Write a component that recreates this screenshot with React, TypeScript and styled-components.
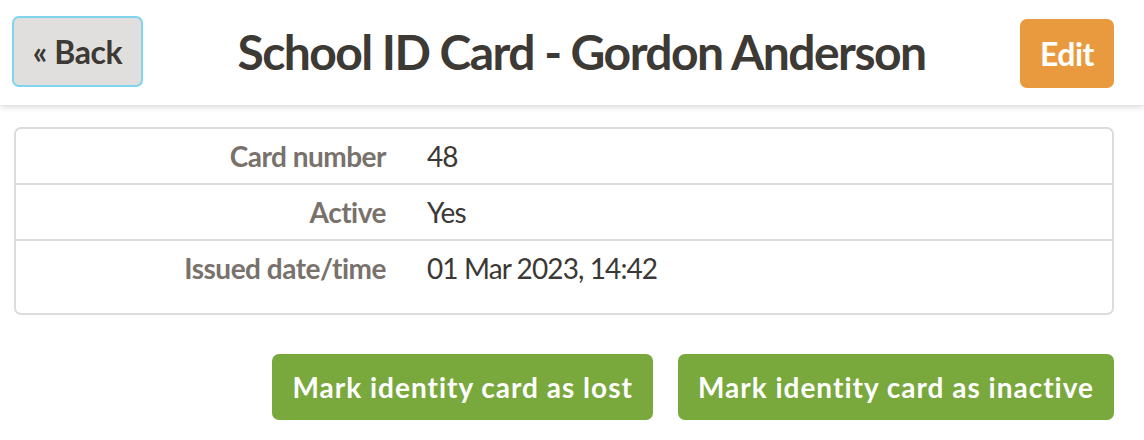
import React from "react";
import styled, { createGlobalStyle } from "styled-components";

const Global = createGlobalStyle`
  html, body { margin: 0; padding: 0; background: #fff; }
  body { font-family: Lato, "Open Sans", sans-serif; color: #3d3935; }
  * { box-sizing: border-box; }
`;

const Page = styled.div`
  width: 1144px;
  min-height: 440px;
  background: #fff;
`;

const Header = styled.header`
  height: 105px;
  display: flex;
  align-items: flex-start;
  padding: 16px 30px 0 12px;
  background: #fff;
  box-shadow: 0 2px 6px rgba(0, 0, 0, 0.16);
  position: relative;
`;

const BackButton = styled.button`
  width: 131px;
  height: 71px;
  border: 2px solid #80d4ef;
  border-radius: 7px;
  background: #e1dfde;
  color: #3d3935;
  font-family: inherit;
  font-weight: 700;
  font-size: 32px;
  letter-spacing: -0.4px;
  padding: 0;
  display: flex;
  align-items: center;
  justify-content: center;
`;

const Title = styled.h1`
  flex: 1;
  margin: 0;
  text-align: center;
  font-size: 48px;
  font-weight: 700;
  letter-spacing: -1.55px;
  line-height: 71px;
  color: #3d3935;
`;

const EditButton = styled.button`
  margin-top: 3px;
  width: 94px;
  height: 69px;
  border: none;
  border-radius: 7px;
  background: #e99a3e;
  color: #fff;
  font-family: inherit;
  font-weight: 700;
  font-size: 32px;
  letter-spacing: -0.5px;
  padding: 0;
`;

const Main = styled.main`
  padding: 22px 30px 0 14px;
`;

const Table = styled.div`
  border: 2px solid #dcdcdc;
  border-radius: 7px;
  padding-bottom: 18px;
`;

const Row = styled.div<{ $last?: boolean }>`
  display: grid;
  grid-template-columns: 370px 1fr;
  align-items: center;
  height: 54px;
  border-bottom: ${(p) => (p.$last ? "none" : "2px solid #dcdcdc")};
  box-sizing: content-box;
`;

const Label = styled.div`
  text-align: right;
  font-size: 28px;
  font-weight: 700;
  letter-spacing: -0.5px;
  color: #78716c;
`;

const Value = styled.div`
  padding-left: 41px;
  font-size: 28px;
  font-weight: 400;
  letter-spacing: -0.9px;
  color: #3b3836;
`;

const Actions = styled.div`
  display: flex;
  justify-content: flex-end;
  gap: 25px;
  margin-top: 39px;
`;

const ActionButton = styled.button`
  height: 66px;
  padding: 0 20px;
  border: none;
  border-radius: 7px;
  background: #79a83d;
  color: #fff;
  font-family: inherit;
  font-weight: 700;
  font-size: 28px;
  letter-spacing: 1px;
`;

const rows = [
  { label: "Card number", value: "48" },
  { label: "Active", value: "Yes" },
  { label: "Issued date/time", value: "01 Mar 2023, 14:42" },
];

export default function App() {
  return (
    <Page>
      <Global />
      <Header>
        <BackButton>« Back</BackButton>
        <Title>School ID Card - Gordon Anderson</Title>
        <EditButton>Edit</EditButton>
      </Header>
      <Main>
        <Table>
          {rows.map((r, i) => (
            <Row key={r.label} $last={i === rows.length - 1}>
              <Label>{r.label}</Label>
              <Value>{r.value}</Value>
            </Row>
          ))}
        </Table>
        <Actions>
          <ActionButton>Mark identity card as lost</ActionButton>
          <ActionButton>Mark identity card as inactive</ActionButton>
        </Actions>
      </Main>
    </Page>
  );
}
